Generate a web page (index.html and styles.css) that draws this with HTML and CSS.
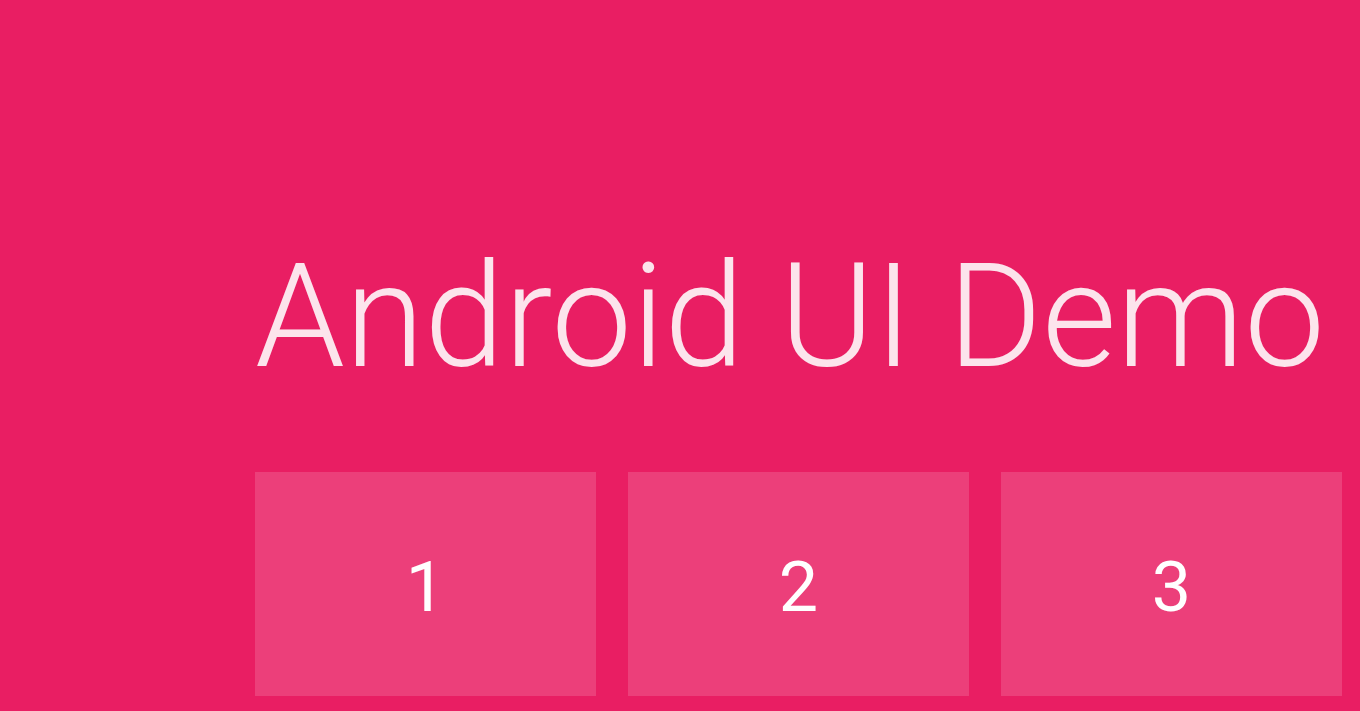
FILE: index.html
```html
<!DOCTYPE html>
<html>
<head>
<meta charset="utf-8">
<link rel="stylesheet" href="styles.css">
</head>
<body>
<main class="page">
  <h1 class="title">Android UI Demo</h1>
  <div class="tiles">
    <div class="tile">1</div>
    <div class="tile">2</div>
    <div class="tile">3</div>
  </div>
</main>
</body>
</html>
```
FILE: styles.css
```css
html, body {
  margin: 0;
  padding: 0;
  height: 100%;
  overflow: hidden;
}
body {
  background: #e91e63;
  font-family: Roboto, "Noto Sans", sans-serif;
}
.page {
  padding: 232px 0 0 255px;
  display: flex;
  flex-direction: column;
}
.title {
  margin: 0;
  font-weight: 300;
  font-size: 144px;
  line-height: 170px;
  color: #fce4ec;
  white-space: nowrap;
}
.tiles {
  margin-top: 70px;
  display: flex;
  gap: 32px;
}
.tile {
  width: 341px;
  height: 224px;
  box-sizing: border-box;
  padding-top: 5px;
  background: rgba(255, 255, 255, 0.15);
  color: #ffffff;
  font-size: 70px;
  display: flex;
  align-items: center;
  justify-content: center;
  flex-shrink: 0;
}
```
